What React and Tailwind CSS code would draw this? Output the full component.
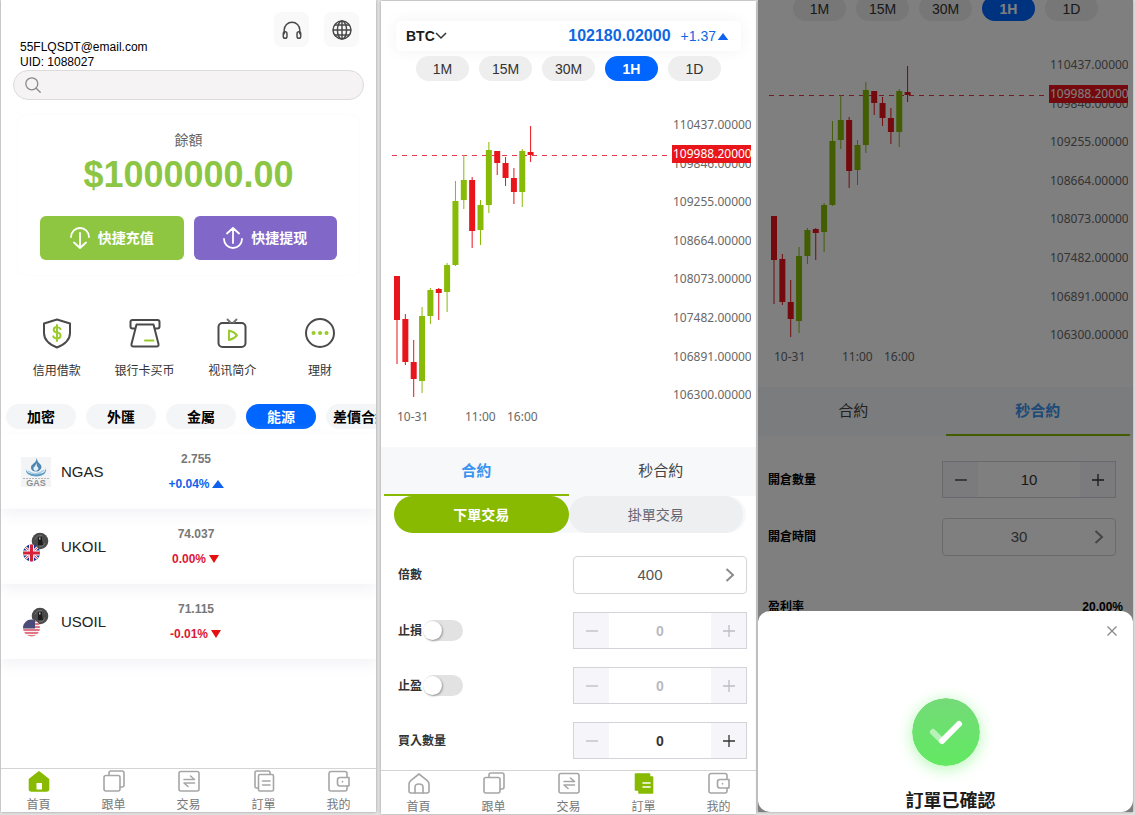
import React, { useId, useState } from 'react';

const CANDLES = [
  // [top wick, body top, body bottom, bottom wick, rising]
  [176, 176, 220, 264, false],
  [214, 219, 262, 265, false],
  [240, 262, 279, 297, false],
  [207, 216, 281, 293, true],
  [188, 190, 216, 224, true],
  [188, 189, 193, 220, false],
  [163, 165, 192, 212, true],
  [81, 101, 165, 166, true],
  [55, 80, 100, 109, true],
  [77, 80, 131, 148, false],
  [100, 105, 130, 145, true],
  [42, 50, 105, 113, true],
  [51, 51, 63, 75, false],
  [57, 63, 78, 86, false],
  [68, 78, 92, 104, false],
  [49, 51, 92, 107, true],
  [26, 52, 55, 62, false],
];

const AXIS = ['110437', '109846', '109255', '108664', '108073', '107482', '106891', '106300'];

const MARKETS = [
  { name: 'NGAS', price: '2.755', change: '+0.04%', up: true, icon: 'gas' },
  { name: 'UKOIL', price: '74.037', change: '0.00%', up: false, icon: 'uk' },
  { name: 'USOIL', price: '71.115', change: '-0.01%', up: false, icon: 'us' },
];

const Chevron = ({ className }) => (
  <svg viewBox="0 0 10 16" className={className} fill="none" stroke="#8b8b8b" strokeWidth="2">
    <path d="M1.5 2 8 8l-6.500 6" />
  </svg>
);

const Triangle = ({ up, className }) => (
  <svg viewBox="0 0 12 8" className={className}>
    {up ? <path d="M6 0 12 8H0z" fill="#0f62ee" /> : <path d="M6 8 1 0h10z" fill="#e60f0f" />}
  </svg>
);

const NavIcon = ({ name, active }) => {
  const box = {
    viewBox: '0 0 24 24',
    className: 'size-6',
    fill: 'none',
    stroke: active ? '#87ba00' : '#a6a6a6',
    strokeWidth: 1.6,
    strokeLinejoin: 'round',
    strokeLinecap: 'round',
  };
  if (name === 'home') {
    return active ? (
      <svg {...box}>
        <path d="M12 3 2.500 10.500V20a2 2 0 0 0 2 2h15a2 2 0 0 0 2-2v-9.500z" fill="#87ba00" />
        <rect x="9.500" y="14" width="5.500" height="6.500" fill="#fff" stroke="none" />
      </svg>
    ) : (
      <svg {...box}>
        <path d="M12 3 4 9.300q-2 1.600-2 4V20a2 2 0 0 0 2 2h16a2 2 0 0 0 2-2v-6.700q0-2.400-2-4z" />
        <path d="M8 22v-6q0-3 4-3t4 3v6" />
      </svg>
    );
  }
  if (name === 'copy') {
    return (
      <svg {...box}>
        <rect x="2" y="6.500" width="16" height="15.500" rx="2" />
        <path d="M7 6V4a2 2 0 0 1 2-2h11a2 2 0 0 1 2 2v12a2 2 0 0 1-2 2h-2" />
      </svg>
    );
  }
  if (name === 'trade') {
    return (
      <svg {...box}>
        <rect x="2" y="2.500" width="20" height="19.500" rx="2" />
        <path d="M7 10.500h10.500l-4-3.500M17.500 14H7l4 3.500" />
      </svg>
    );
  }
  if (name === 'orders') {
    return active ? (
      <svg {...box}>
        <path d="M3.500 3h14v3h3v16H7v-3H3.500z" fill="#87ba00" />
        <path d="M11 12h7M11 16h7" stroke="#fff" />
      </svg>
    ) : (
      <svg {...box}>
        <path d="M6 19H4.500A1.500 1.500 0 0 1 3 17.500v-14A1.500 1.500 0 0 1 4.500 2h12A1.500 1.500 0 0 1 18 3.500V5" />
        <rect x="6.500" y="5.500" width="15" height="16.500" rx="1.500" />
        <path d="M10.500 12h7.500M10.500 16h7.500" />
      </svg>
    );
  }
  return (
    <svg {...box}>
      <path d="M20 8V4.500a2 2 0 0 0-2-2H4a2 2 0 0 0-2 2V20a2 2 0 0 0 2 2h14a2 2 0 0 0 2-2v-3" />
      <path d="M13 8.500h9V17h-9a2.500 2.500 0 0 1-2.500-2.500V11A2.500 2.500 0 0 1 13 8.500zM15.500 12.500v.5" />
    </svg>
  );
};

const NAV = [
  ['home', '首頁'],
  ['copy', '跟单'],
  ['trade', '交易'],
  ['orders', '訂單'],
  ['wallet', '我的'],
];

const BottomNav = ({ current }) => (
  <nav className="mt-auto grid h-11 grid-cols-5 border-t border-[#d4d4d4] bg-white">
    {NAV.map(([id, label]) => (
      <a key={id} href={`#${id}`} className="flex flex-col items-center text-xs leading-4 text-[#777]">
        <NavIcon name={id} active={id === current} />
        <span className="mt-1">{label}</span>
      </a>
    ))}
  </nav>
);

const FEATURES = [
  {
    label: '信用借款',
    art: (
      <>
        <path d="M16 2.500 29 6.500v9.500c0 7-5.500 11.500-13 14.500C8.500 27.500 3 23 3 16V6.500z" />
        <path
          d="M19.500 12q-1-2-3.500-2-3.300 0-3.300 2.700 0 2.300 3.300 2.800 3.600.6 3.600 3.100Q19.600 21.500 16 21.500q-2.800 0-3.800-2.200M16 8v16"
          stroke="#9acb2c"
        />
      </>
    ),
  },
  {
    label: '银行卡买币',
    art: (
      <>
        <path d="M6 11.500H3.500q-2 0-2-2V5q0-2 2-2h25q2 0 2 2v4.500q0 2-2 2H26" />
        <path d="M7.500 7.500h17l5 19.500q.5 2.500-2 2.500h-23q-2.500 0-2-2.500z" />
        <path d="M16 23.500h8.500" stroke="#9acb2c" />
      </>
    ),
  },
  {
    label: '视讯简介',
    art: (
      <>
        <rect x="2.500" y="6" width="27" height="24" rx="4" />
        <path d="m11.500 2.500 3 3M20.500 2.500l-3 3" stroke="#777" />
        <path d="M13 13.500v9.500q5.500-1.500 8-4.700-2.500-3.300-8-4.800z" stroke="#9acb2c" />
      </>
    ),
  },
  {
    label: '理財',
    art: (
      <>
        <circle cx="16" cy="16" r="14" />
        <path d="M9.500 16h.1M16 16h.1M22.500 16h.1" stroke="#9acb2c" strokeWidth="4" />
      </>
    ),
  },
];

const OilIcon = ({ country }) => {
  const id = useId();
  return (
    <svg viewBox="0 0 30 30" className="size-[30px]">
      <defs>
        <clipPath id={id}>
          <circle cx="10.500" cy="21" r="8.500" />
        </clipPath>
      </defs>
      <circle cx="19" cy="9" r="8.300" fill="#4a4a4a" />
      <path d="M14 7.500q2-5 7-4M24 11q-1 4-6 4" stroke="#727272" fill="none" />
      <path d="M17 5h4v3l1 5h-5z" fill="#1c1c1c" />
      <path d="M18 5.500h1.500v2H18z" fill="#b5b5b5" />
      <g clipPath={`url(#${id})`}>
        {country === 'uk' ? (
          <>
            <path d="M1 12h19v18H1z" fill="#173b8f" />
            <path d="m2 13 17 16M19 13 2 29" stroke="#fff" strokeWidth="2.500" />
            <path d="m2 13 17 16M19 13 2 29" stroke="#d52038" strokeWidth="1" />
            <path d="M10.500 12v18M1 21h19" stroke="#fff" strokeWidth="5" />
            <path d="M10.500 12v18M1 21h19" stroke="#d52038" strokeWidth="3.200" />
          </>
        ) : (
          <>
            <path d="M1 12h19v18H1z" fill="#f8f2f3" />
            <path d="M1 14h19M1 17h19M1 20h19M1 23h19M1 26h19M1 29h19" stroke="#d94b63" strokeWidth="1.400" />
            <path d="M1 12h13v9.500H1z" fill="#4a4b78" />
          </>
        )}
      </g>
    </svg>
  );
};

const GasIcon = () => (
  <svg viewBox="0 0 30 30" className="size-[30px]">
    <rect width="30" height="30" fill="#f3f4f5" />
    <path d="M5 12q-1 7 10 7.500Q26 19 25 11q-1 5-5 5.500H10Q6 16 5 12z" fill="#5c9cc6" />
    <path d="M7 14q8 6 16-1" stroke="#a9cde3" strokeWidth="1.500" fill="none" />
    <path d="M15.500 1q1 4 3.500 6 3 3 0 6-2 2-4 1.500-5 0-5-4 0-2 2.500-4 3-2 3-5.500z" fill="#4d87b1" />
    <path d="M15.500 6q0 3 1.500 4.500T15 14q-3-.5-2.500-3.500 2-1.500 3-4.500z" fill="#e4f0f7" />
    <path d="M2 21.500h26" stroke="#b5b5b5" strokeDasharray="2 1" />
    <text x="15" y="29" textAnchor="middle" fontSize="9" fontWeight="bold" fill="#8f8f8f" fontFamily="Liberation Sans, sans-serif">
      GAS
    </text>
  </svg>
);

const HomeScreen = () => {
  const [tab, setTab] = useState('能源');
  return (
    <section className="mr-[5px] mb-[3px] flex min-w-0 flex-1 flex-col overflow-hidden bg-white shadow-[0_0_3px_#999]">
      <header className="flex justify-between pt-3 pr-[17px] pl-[19px]">
        <div className="mt-7 text-xs leading-[15px] text-black">
          <p>55FLQSDT@email.com</p>
          <p>UID: 1088027</p>
        </div>
        <div className="flex gap-[15px]">
          <button aria-label="客服" className="flex size-[35px] items-center justify-center rounded-lg bg-[#f9f9f9]">
            <svg viewBox="0 0 24 24" className="size-[22px]" fill="none" stroke="#484848" strokeWidth="1.600" strokeLinecap="round">
              <path d="M3.500 16v-4a8.500 8.500 0 0 1 17 0v4" />
              <rect x="2.500" y="14" width="4" height="7" rx="2" />
              <rect x="17.500" y="14" width="4" height="7" rx="2" />
            </svg>
          </button>
          <button aria-label="語言" className="flex size-[35px] items-center justify-center rounded-lg bg-[#f9f9f9]">
            <svg viewBox="0 0 24 24" className="size-[22px]" fill="none" stroke="#484848" strokeWidth="1.600">
              <circle cx="12" cy="12" r="9.800" />
              <ellipse cx="12" cy="12" rx="5" ry="9.800" />
              <path d="M12 2v20M2 12h20M4 6.500h16M4 17.500h16" />
            </svg>
          </button>
        </div>
      </header>

      <label className="mx-3 flex h-[30px] items-center rounded-full border border-[#dcdadb] bg-[#f5f3f4] px-[11px]">
        <svg viewBox="0 0 16 16" className="size-4" fill="none" stroke="#8a8a8a" strokeWidth="1.300" strokeLinecap="round">
          <circle cx="6.800" cy="6.800" r="6" />
          <path d="m11.200 11.200 4 4" />
        </svg>
        <input type="search" aria-label="搜尋" className="ml-2 min-w-0 flex-1 bg-transparent text-xs outline-none" />
      </label>

      <div className="mx-[17px] mt-[15px] rounded-lg px-[22px] py-[15px] text-center shadow-[0_0_2px_#f4f4f4]">
        <p className="text-sm leading-5 text-[#666]">餘額</p>
        <p className="mt-[5px] text-4xl leading-10 font-bold text-[#8cc644]">$1000000.00</p>
        <div className="mt-[21px] grid grid-cols-2 gap-2.5 text-sm font-bold text-white">
          <button className="flex h-11 items-center justify-center gap-2 rounded-md bg-[#8ec641]">
            <svg viewBox="0 0 20 22" className="w-5" fill="none" stroke="#fff" strokeWidth="1.800" strokeLinecap="round" strokeLinejoin="round">
              <path d="M1 10a9 9 0 0 1 18 0M10 6v15M4 15.500l6 5.500 6-5.500" />
            </svg>
            快捷充值
          </button>
          <button className="flex h-11 items-center justify-center gap-2 rounded-md bg-[#8067c8]">
            <svg viewBox="0 0 20 22" className="w-5" fill="none" stroke="#fff" strokeWidth="1.800" strokeLinecap="round" strokeLinejoin="round">
              <path d="M1 12a9 9 0 0 0 18 0M10 16V1M4 6.500 10 1l6 5.500" />
            </svg>
            快捷提现
          </button>
        </div>
      </div>

      <div className="mx-3 mt-[42px] grid grid-cols-4">
        {FEATURES.map((f) => (
          <a key={f.label} href="#feature" className="flex flex-col items-center text-xs leading-4 whitespace-nowrap text-[#333]">
            <svg
              viewBox="0 0 32 32"
              className="size-8"
              fill="none"
              stroke="#4a4a4a"
              strokeWidth="2"
              strokeLinecap="round"
              strokeLinejoin="round"
            >
              {f.art}
            </svg>
            <span className="mt-3.5">{f.label}</span>
          </a>
        ))}
      </div>

      <div className="mt-[25px] flex gap-2.5 overflow-hidden pl-[5px]">
        {['加密', '外匯', '金屬', '能源', '差價合約'].map((t) => (
          <button
            key={t}
            onClick={() => setTab(t)}
            className={`h-[25px] w-[70px] shrink-0 rounded-full text-sm leading-5 font-bold whitespace-nowrap ${
              t === tab ? 'bg-[#0066ff] text-white' : 'bg-[#f4f5f6] text-black'
            }`}
          >
            {t}
          </button>
        ))}
      </div>

      <ul className="mt-[5px]">
        {MARKETS.map((m) => (
          <li key={m.name} className="flex h-[75px] items-center pl-5 shadow-[0_6px_14px_#f3f2f6]">
            {m.icon === 'gas' ? <GasIcon /> : <OilIcon country={m.icon} />}
            <span className="ml-2.5 w-[85px] text-[15px] leading-5 text-[#222]">{m.name}</span>
            <div className="flex w-[100px] flex-col items-center gap-[9px] text-xs leading-4 font-bold">
              <span className="text-[#777]">{m.price}</span>
              <span className={`flex items-center gap-0.5 ${m.up ? 'text-[#0f62ee]' : 'text-[#dc1737]'}`}>
                {m.change}
                <Triangle up={m.up} className="h-2 w-3" />
              </span>
            </div>
          </li>
        ))}
      </ul>

      <BottomNav current="home" />
    </section>
  );
};

const Intervals = () => {
  const [value, setValue] = useState('1H');
  return (
    <div className="flex justify-center gap-2.5">
      {['1M', '15M', '30M', '1H', '1D'].map((t) => (
        <button
          key={t}
          onClick={() => setValue(t)}
          className={`h-[25px] w-[53px] rounded-full text-sm leading-5 ${
            t === value ? 'bg-[#0066ff] font-bold text-white' : 'bg-[#eee] text-[#333]'
          }`}
        >
          {t}
        </button>
      ))}
    </div>
  );
};

const PriceChart = () => (
  <div className="mt-[19px] mr-[5px] ml-2.5">
    <svg viewBox="0 0 360 330" className="w-full" fontFamily="Noto Sans, sans-serif" fontSize="12" fill="#686868">
      {/* last price */}
      {Array.from({ length: 28 }, (_, i) => (
        <rect key={i} x={1 + i * 10} y="55" width="5" height="1" fill="#e5384a" />
      ))}
      {CANDLES.map(([high, top, bottom, low, rising], i) => {
        const x = 6 + i * 8.35;
        const color = rising ? '#87bb07' : '#e8151b';
        return (
          <g key={i} fill={color}>
            <rect x={x - 0.5} y={high} width="1" height={low - high} />
            <rect x={x - 3} y={top} width="6" height={bottom - top} />
          </g>
        );
      })}
      {AXIS.map((v, i) => (
        <text key={v} x="282" y={29 + i * 38.6}>
          {v}.00000
        </text>
      ))}
      <rect x="281" y="45" width="79" height="18" fill="#e8151b" />
      <text x="282" y="58" fill="#fff">109988.20000</text>
      <text x="6" y="321">10-31</text>
      <text x="74" y="321">11:00</text>
      <text x="116" y="321">16:00</text>
    </svg>
  </div>
);

const ContractTabs = ({ initial }) => {
  const [tab, setTab] = useState(initial);
  return (
    <div className="mt-[17px] grid grid-cols-2 bg-[#f7f8fa] px-[3px]">
      {['合約', '秒合約'].map((t) => (
        <button
          key={t}
          onClick={() => setTab(t)}
          className={`h-[49px] border-b-2 text-[15px] leading-5 ${
            t === tab ? 'border-[#87ba00] font-bold text-[#3a94ef]' : 'border-transparent text-[#444]'
          }`}
        >
          {t}
        </button>
      ))}
    </div>
  );
};

const Picker = ({ id, value }) => (
  <div className="relative h-[38px] w-[174px]">
    <select
      id={id}
      defaultValue={value}
      className="size-full appearance-none rounded border border-[#d5d5d5] pr-5 text-center text-[15px] font-normal text-[#555] [text-align-last:center]"
    >
      <option>{value}</option>
    </select>
    <Chevron className="pointer-events-none absolute top-[11px] right-3 h-4 w-2.5" />
  </div>
);

const Stepper = ({ id, start, label, disabled, strong }) => {
  const [n, setN] = useState(start);
  const locked = disabled || n <= 0;
  return (
    <div className="flex h-[37px] w-[174px] border border-[#d3d3da]">
      <button
        aria-label={`${label} 減`}
        disabled={locked}
        onClick={() => setN(n - 1)}
        className={`flex w-[35px] items-center justify-center bg-[#f6f6fa] ${locked ? 'text-[#bcbcc2]' : 'text-[#333]'}`}
      >
        <svg viewBox="0 0 12 12" className="size-3" stroke="currentColor" strokeWidth="1.300">
          <path d="M0 6h12" />
        </svg>
      </button>
      <input
        id={id}
        type="text"
        inputMode="numeric"
        value={n}
        disabled={disabled}
        onChange={(e) => setN(Number(e.target.value) || 0)}
        className={`min-w-0 flex-1 bg-transparent text-center outline-none ${
          strong ? 'text-sm font-bold' : 'text-[15px] font-normal'
        } ${disabled ? 'text-[#b9b9c2]' : 'text-[#333]'}`}
      />
      <button
        aria-label={`${label} 加`}
        disabled={disabled}
        onClick={() => setN(n + 1)}
        className={`flex w-[35px] items-center justify-center bg-[#f6f6fa] ${disabled ? 'text-[#bcbcc2]' : 'text-[#333]'}`}
      >
        <svg viewBox="0 0 12 12" className="size-3" stroke="currentColor" strokeWidth="1.300">
          <path d="M0 6h12M6 0v12" />
        </svg>
      </button>
    </div>
  );
};

const LimitRow = ({ id, label }) => {
  const [on, setOn] = useState(false);
  return (
    <div className="flex items-center justify-between">
      <div className="flex items-center">
        <label htmlFor={`${id}-on`}>{label}</label>
        <span className="relative ml-px h-[21px] w-10">
          <input
            id={`${id}-on`}
            type="checkbox"
            checked={on}
            onChange={() => setOn(!on)}
            className="peer block size-full appearance-none rounded-full bg-[#e2e2e2] checked:bg-[#87ba00]"
          />
          <span className="pointer-events-none absolute top-px left-0 size-[19px] rounded-full bg-white shadow-[1px_1px_2px_#999] peer-checked:left-5" />
        </span>
      </div>
      <Stepper id={id} label={label} start={0} disabled={!on} strong />
    </div>
  );
};

const TradeScreen = () => {
  const [mode, setMode] = useState('下單交易');
  return (
    <section className="mt-px mr-0.5 mb-px flex min-w-0 flex-1 flex-col overflow-hidden bg-white shadow-[0_0_3px_#999]">
      <header className="mx-[15px] mt-5 mb-[5px] flex h-[30px] items-center rounded-md pr-3 pl-2.5 shadow-[0_0_16px_#f2f2f2]">
        <div className="relative">
          <select aria-label="幣種" className="appearance-none bg-transparent pr-3 text-sm leading-5 font-bold text-[#1c1c1c]">
            <option>BTC</option>
          </select>
          <svg
            viewBox="0 0 12 8"
            className="pointer-events-none absolute top-2 right-0 h-2 w-3"
            fill="none"
            stroke="#333"
            strokeWidth="1.500"
          >
            <path d="m1 1 5 5 5-5" />
          </svg>
        </div>
        <span className="ml-auto text-base leading-5 font-bold text-[#1067e0]">102180.02000</span>
        <span className="ml-2.5 text-sm leading-5 text-[#1067e0]">+1.37</span>
        <Triangle up className="ml-px h-[7px] w-3" />
      </header>
      <Intervals />
      <PriceChart />
      <ContractTabs initial="合約" />

      <div className="mr-2.5 ml-[13px] grid grid-cols-2 rounded-full bg-[#f7f8fa] pr-[3px]">
        {['下單交易', '掛單交易'].map((m) => (
          <button
            key={m}
            onClick={() => setMode(m)}
            className={`h-[37px] rounded-full text-sm leading-5 ${
              m === mode ? 'bg-[#87ba00] font-bold text-white' : 'bg-[#eeeff1] text-[#646470]'
            }`}
          >
            {m}
          </button>
        ))}
      </div>

      <form
        className="mt-[23px] mr-[9px] mb-2.5 ml-[17px] flex flex-col gap-[18px] text-xs leading-4 font-bold text-[#333]"
        onSubmit={(e) => e.preventDefault()}
      >
        <div className="flex items-center justify-between">
          <label htmlFor="leverage">倍數</label>
          <Picker id="leverage" value="400" />
        </div>
        <LimitRow id="stop-loss" label="止損" />
        <LimitRow id="take-profit" label="止盈" />
        <div className="flex items-center justify-between">
          <label htmlFor="lots">買入數量</label>
          <Stepper id="lots" label="買入數量" start={0} strong />
        </div>
      </form>

      <BottomNav current="orders" />
    </section>
  );
};

const ConfirmSheet = ({ onClose }) => (
  <div className="absolute inset-0 flex items-end bg-black/50">
    <div role="dialog" aria-labelledby="confirm-title" className="flex w-full flex-col items-center rounded-xl bg-white">
      <button aria-label="關閉" onClick={onClose} className="mt-[11px] mr-3 self-end p-1">
        <svg viewBox="0 0 10 10" className="size-2.5" stroke="#888" strokeWidth="1.300">
          <path d="m.5.5 9 9M9.500.5l-9 9" />
        </svg>
      </button>
      <svg viewBox="0 0 68 68" className="mt-[58px] size-[68px] rounded-full shadow-[0_3px_16px_#b5f7b5]">
        <defs>
          <linearGradient id="ok-fill" x1="0" y1="0" x2="0" y2="1">
            <stop offset="0" stopColor="#74db78" />
            <stop offset="1" stopColor="#62e962" />
          </linearGradient>
        </defs>
        <circle cx="34" cy="34" r="34" fill="url(#ok-fill)" />
        <g fill="none" strokeWidth="6" strokeLinecap="round">
          <path d="m21 34 9 9" stroke="#b9f2b9" />
          <path d="m30 43 17-17" stroke="#fff" />
        </g>
      </svg>
      <h2 id="confirm-title" className="mt-6 pl-2.5 text-lg leading-[22px] font-bold text-[#1c1c1c]">
        訂單已確認
      </h2>
    </div>
  </div>
);

const SecondsScreen = () => {
  const [open, setOpen] = useState(true);
  return (
    <section className="relative mb-[3px] min-w-0 flex-1 overflow-hidden bg-white shadow-[0_0_3px_#999]">
      {/* scrolled so the top of the interval bar is cut off */}
      <div className="-mt-1">
        <Intervals />
        <PriceChart />
        <ContractTabs initial="秒合約" />
        <div className="mt-[25px] ml-2.5 text-xs leading-4 font-bold text-black">
          <div className="mr-[17px] flex items-center justify-between">
            <label htmlFor="open-lots">開倉數量</label>
            <Stepper id="open-lots" label="開倉數量" start={10} />
          </div>
          <div className="mt-5 mr-[17px] flex items-center justify-between">
            <label htmlFor="open-time">開倉時間</label>
            <Picker id="open-time" value="30" />
          </div>
          <div className="mt-[43px] mr-2.5 flex justify-between">
            <span>盈利率</span>
            <span>20.00%</span>
          </div>
        </div>
      </div>
      {open && <ConfirmSheet onClose={() => setOpen(false)} />}
    </section>
  );
};

export default function App() {
  return (
    <main className="flex min-h-screen bg-[#e4e4e4] pr-0.5 pl-px font-['Liberation_Sans','Noto_Sans_CJK_TC',sans-serif]">
      <HomeScreen />
      <TradeScreen />
      <SecondsScreen />
    </main>
  );
}
